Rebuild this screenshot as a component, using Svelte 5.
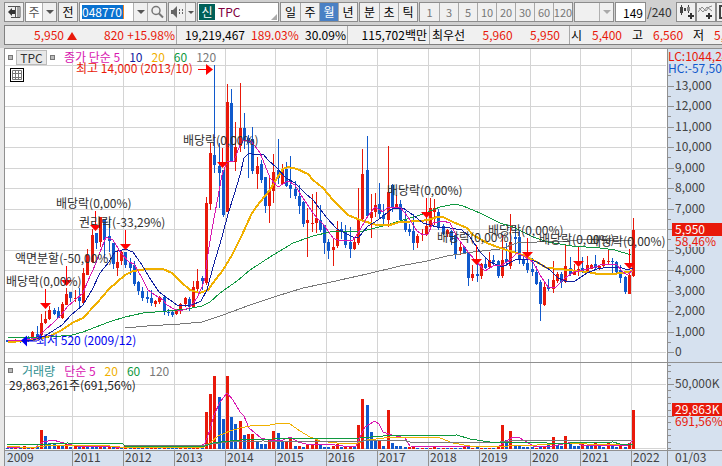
<script lang="ts">
	type Candle = [dir: string, high: number, top: number, bottom: number, low: number];

	const periods = ['일', '주', '월', '년'];
	const intraday = ['분', '초', '틱'];
	const steps = [1, 3, 5, 10, 20, 30, 60, 120];

	let period = $state('월');
	let code = $state('048770');
	let count = $state('149');

	// One entry per candle: direction, high, body top, body bottom, low
	const candles: Candle[] = `d 340 340 342 342|u 340 340 342 342|u 339 340 342 342|d 340 340 342 343|u 337 340 341 342
d 336 338 341 342|u 331 332 338 339|d 326 334 337 340|u 314 323 335 337|u 311 319 323 324
u 306 310 319 320|d 308 310 314 315|d 307 311 318 318|u 302 304 318 319|u 288 294 305 305
d 292 292 298 302|u 290 298 299 302|d 288 297 301 307|u 268 273 303 303|u 249 255 275 275
u 229 235 262 263|d 233 233 243 249|u 217 217 242 247|d 219 219 240 258|d 219 236 241 252
d 243 243 264 269|u 250 262 268 276|u 251 252 261 265|d 252 252 265 268|d 258 262 268 275
d 261 265 284 286|d 281 282 291 295|d 287 291 298 301|d 291 297 299 303|d 290 298 303 306
u 300 301 304 307|u 296 297 302 304|d 295 297 312 315|d 309 312 313 316|d 310 312 315 317
u 309 310 314 315|u 303 304 311 314|u 297 298 304 307|d 297 299 307 311|u 281 287 307 308
u 269 281 289 292|d 276 278 281 290|u 197 203 283 285|u 143 153 204 210|d 65 155 165 173
d 143 166 173 208|d 170 170 215 217|u 84 102 212 212|d 89 103 161 162|u 122 147 162 171
u 83 128 146 152|d 113 128 140 149|d 135 138 143 178|d 127 139 171 174|u 157 166 174 189
d 160 164 180 183|d 177 177 206 213|u 176 191 206 223|u 154 172 191 203|d 139 170 178 184
u 164 170 184 185|d 162 169 186 187|d 156 185 189 198|d 181 189 196 199|d 185 196 206 214
d 201 202 224 227|u 208 220 223 257|u 194 223 224 232|u 192 218 223 233|d 205 220 230 232
d 225 225 243 254|d 239 242 251 259|u 239 247 250 266|u 221 230 246 248|d 222 229 232 239
d 225 231 245 248|d 227 242 249 258|u 237 242 249 250|u 188 219 243 245|u 149 174 219 222
d 136 170 216 217|u 194 212 218 238|u 193 205 212 217|d 183 204 214 218|d 204 215 219 224
u 146 192 220 227|d 184 185 207 212|u 195 204 208 208|d 200 204 220 222|d 211 220 230 232
d 224 229 232 236|d 214 231 243 250|u 234 236 243 248|u 229 234 235 241|u 198 226 235 236
u 198 208 227 229|u 199 208 212 225|d 209 212 227 230|d 224 226 234 235|u 229 230 234 237
d 230 231 240 245|d 235 235 254 259|u 241 247 251 255|d 246 247 254 254|d 252 253 278 286
u 265 274 278 281|d 261 274 276 282|u 263 264 276 279|d 258 264 268 269|u 252 260 267 269
d 255 260 262 265|d 260 261 276 278|u 235 260 276 278|d 243 259 262 266|u 214 242 266 269
d 226 237 239 253|d 230 237 260 264|d 256 260 264 266|d 258 263 270 273|d 258 269 272 276
d 266 272 284 285|d 280 282 304 321|u 283 287 305 306|d 279 287 289 291|u 261 280 289 293
u 272 274 281 283|d 272 274 282 288|u 245 266 282 283|d 257 268 274 276|u 264 270 275 275
u 267 269 272 276|d 257 268 271 273|u 256 265 272 272|u 264 265 269 269|d 255 264 268 270
u 265 266 268 270|u 258 260 266 267|u 249 261 262 264|d 258 261 262 275|d 261 262 272 275
d 265 270 278 283|d 276 277 292 294|u 273 275 294 294|u 218 230 276 277`
		.split(/[\n|]/)
		.map((row) => {
			const [dir, ...values] = row.trim().split(' ');
			return [dir, ...values.map(Number)] as Candle;
		});

	// Bar heights, negative when the volume fell
	const volumes = [
		-1, -1, 1, -1, 3, -1, 1, -2, 19, -13, -6, -5, 4, -4, 5, -2, 3, -3, 3, -3, -3, -3, 3, -2, 2, -2, 2,
		-2, 3, -3, 2, -2, 3, -2, 2, 2, -2, 2, -2, -2, -1, 2, 1, -2, 2, 2, -2, 37, 55, 73, -52, -30, 73,
		-32, -25, 28, -14, 15, 15, -7, -5, -5, 10, 18, -16, -7, 7, 10, -3, 3, -2, 4, 4, 10, -4, -2, -2, 3,
		5, -2, 2, 2, -2, 24, 50, -44, -17, -9, 9, -3, 39, -6, -3, -3, -2, 2, 2, -1, 1, -1, 1, 3, -1, 1,
		-1, 1, -1, -1, 3, -2, 1, -2, 1, -1, 1, -1, 2, 24, -9, 18, -3, -3, -2, -2, -2, 1, -2, 3, -5, 12,
		-4, -3, 13, -5, -3, -3, 5, -3, -3, 6, -3, -2, 6, -4, -2, 4, -2, 6, 39
	];

	const priceLines = [
		{
			name: 'ma120',
			points:
				'125,328 147,326 180,324 202,322 223,315 250,305 277,296 303,288 327,283 340,280 367,274 400,266 427,261 447,256 473,252 500,249 517,243 537,242 567,241 587,239 607,240 631,241'
		},
		{
			name: 'ma60',
			points:
				'8,338 50,337 72,335 83,332 96,327 109,322 125,317 143,313 167,311 187,309 202,306 210,302 220,293 237,281 250,270 270,257 293,243 313,236 330,232 350,231 363,231 383,226 400,221 417,216 428,212 440,207 455,204 463,206 480,213 500,223 513,227 533,237 548,242 572,246 600,248 615,250 631,255'
		},
		{
			name: 'ma20',
			points:
				'8,342 25,341 38,339 50,336 62,330 72,323 83,318 97,303 109,289 125,275 133,271 147,269 163,269 172,273 180,281 190,290 200,293 208,290 213,283 223,270 232,255 242,235 252,213 260,202 270,190 277,178 283,169 288,167 297,169 308,174 313,180 323,188 333,200 341,208 348,215 360,220 377,225 390,225 400,222 420,221 428,220 437,217 443,217 453,222 467,228 473,235 487,243 500,248 513,252 523,255 535,261 547,268 560,269 577,271 588,272 598,274 613,274 628,272 633,271'
		},
		{
			name: 'ma10',
			points:
				'8,341 33,340 45,336 62,325 71,315 83,305 92,290 100,273 109,262 115,252 125,249 133,252 142,265 151,280 159,292 170,300 177,305 190,306 201,301 207,290 213,267 222,237 228,214 234,195 240,175 244,158 249,153 255,155 263,154 268,160 277,168 286,178 295,183 305,193 313,200 327,218 337,229 353,237 358,238 368,226 378,220 393,208 403,208 413,215 423,223 437,227 450,228 462,230 470,237 480,252 490,262 502,267 517,259 527,259 537,262 550,270 558,278 568,282 575,281 587,273 597,269 610,267 620,267 627,270 633,268'
		},
		{
			name: 'ma5',
			points:
				'8,341 25,340 37,338 45,330 54,322 62,314 67,307 75,300 83,293 87,283 96,263 100,252 106,237 113,240 121,253 129,262 134,264 142,278 148,290 155,295 163,300 167,305 174,309 180,311 189,308 197,298 202,287 205,278 207,260 211,235 215,213 222,175 227,162 234,161 240,145 244,140 252,142 260,153 267,170 270,178 278,187 288,181 295,185 303,198 311,210 316,217 324,225 333,238 340,241 353,240 360,230 366,219 375,207 383,212 388,207 400,207 408,217 417,231 423,235 428,234 433,223 443,221 450,223 457,237 468,252 475,260 485,271 493,266 502,265 510,260 517,253 525,257 533,262 540,275 548,287 555,288 565,278 574,272 583,270 595,267 603,264 616,264 623,272 627,275 633,270'
		}
	];

	const volumeLines = [
		{
			name: 'ma5',
			points:
				'7,447 36,448 38,445 43,442 53,440 60,442 67,444 77,446 103,446 115,447 200,447 205,443 210,430 214,415 220,402 227,393 233,400 240,412 244,416 249,428 261,438 269,440 283,440 290,437 298,442 310,445 327,444 343,446 356,446 360,437 365,427 375,421 379,424 383,432 392,435 405,438 410,446 470,447 498,447 505,442 513,437 520,438 528,443 535,447 553,446 573,442 585,446 613,445 627,446 633,440'
		},
		{
			name: 'ma20 thin',
			points:
				'7,446 20,447 37,447 53,445 100,445 120,447 204,447 210,443 218,436 230,431 240,428 250,426 270,425 280,423 290,424 300,431 310,437 320,441 337,443 358,443 367,440 393,437 417,437 440,438 453,443 470,446 498,447 508,446 537,445 567,443 587,444 603,445 630,444'
		},
		{
			name: 'ma120',
			points:
				'125,445 205,445 227,442 263,441 360,442 367,440 403,440 410,442 500,442 510,441 633,440'
		},
		{
			name: 'ma60',
			points:
				'7,444 50,444 67,443 123,444 125,446 205,446 213,443 230,441 240,440 273,439 360,438 383,436 457,435 470,439 490,442 530,442 547,443 570,443 613,442 620,444 633,444'
		}
	];

	const years = [
		{ x: 72, year: 2011 },
		{ x: 123, year: 2012 },
		{ x: 174, year: 2013 },
		{ x: 225, year: 2014 },
		{ x: 275, year: 2015 },
		{ x: 326, year: 2016 },
		{ x: 377, year: 2017 },
		{ x: 428, year: 2018 },
		{ x: 479, year: 2019 },
		{ x: 530, year: 2020 },
		{ x: 580, year: 2021 },
		{ x: 631, year: 2022 }
	];

	const notes = [
		{ x: 6, y: 286, text: '배당락(0,00%)' },
		{ x: 15, y: 263, text: '액면분할(-50,00%)' },
		{ x: 56, y: 208, text: '배당락(0,00%)' },
		{ x: 79, y: 227, text: '권리락(-33,29%)' },
		{ x: 183, y: 145, text: '배당락(0,00%)' },
		{ x: 387, y: 195, text: '배당락(0,00%)' },
		{ x: 437, y: 242, text: '배당락(0,00%)' },
		{ x: 488, y: 235, text: '배당락(0,00%)' },
		{ x: 539, y: 244, text: '배당락(0,00%)' },
		{ x: 590, y: 246, text: '배당락(0,00%)' }
	];

	const arrows = [
		{ x: 45, from: 289, to: 309 },
		{ x: 66, from: 266, to: 286 },
		{ x: 95, from: 211, to: 231 },
		{ x: 125, from: 230, to: 250 },
		{ x: 222, from: 148, to: 168 },
		{ x: 426, from: 198, to: 218 },
		{ x: 476, from: 245, to: 265 },
		{ x: 527, from: 238, to: 258 },
		{ x: 578, from: 247, to: 267 },
		{ x: 629, from: 249, to: 269 }
	];

	const prices = Array.from({ length: 14 }, (_, k) => k);
	const volumeTicks = Array.from({ length: 14 }, (_, k) => Math.round(448 - k * 6.4));

	function candleX(i: number) {
		return Math.round(7 + i * 4.23);
	}

	function priceY(k: number) {
		return Math.round(352 - k * 20.5);
	}
</script>

<div class="window">
	<div class="toolbar">
		<button type="button" class="box icon" aria-label="패널">
			<svg width="14" height="14" viewBox="0 0 14 14">
				<path d="M2 1.5h11v11H4M8.500 1v12M11 1v12M1 1.500h3" fill="none" stroke="#555" />
				<path d="M1 7l4-4v8zM5 5h3v4H5z" fill="#333" />
			</svg>
		</button>
		<div class="box combo">
			<span class="type">주</span>
			<button type="button" class="drop" aria-label="종목 구분"></button>
		</div>
		<button type="button" class="box all">전</button>
		<div class="box code">
			<input aria-label="종목 코드" bind:value={code} size="6" />
			<span class="spacer"></span>
			<button type="button" class="drop" aria-label="최근 종목"></button>
			<button type="button" class="search" aria-label="검색">
				<svg width="14" height="14" viewBox="0 0 14 14">
					<circle cx="6" cy="5.500" r="4" fill="none" stroke="#777" stroke-width="1.500" />
					<path d="M9 8.500l4 4" stroke="#777" stroke-width="2" />
				</svg>
			</button>
		</div>
		<div class="box sound">
			<button type="button" aria-label="소리">
				<svg width="14" height="14" viewBox="0 0 14 14">
					<path d="M1 5h2l4-4v12L3 9H1z" fill="#666" />
					<path d="M9 5h1M12 5h1M9 8h1M12 8h1" stroke="#666" stroke-width="2" />
				</svg>
			</button>
			<button type="button" class="drop narrow" aria-label="소리 설정"></button>
		</div>
		<div class="box stock">
			<span class="badge">신</span>
			<span>TPC</span>
			<i class="corner"></i>
		</div>
		<div class="box group">
			{#each periods as item}
				<button type="button" class:active={period === item} onclick={() => (period = item)}>{item}</button>
			{/each}
		</div>
		<div class="box group">
			{#each intraday as item}
				<button type="button" class:active={period === item} onclick={() => (period = item)}>{item}</button>
			{/each}
		</div>
		<div class="box group muted">
			{#each steps as step}
				<button type="button" disabled>{step}</button>
			{/each}
		</div>
		<div class="box combo empty">
			<span class="type"></span>
			<button type="button" class="drop" aria-label="주기" disabled></button>
		</div>
		<input class="box count" aria-label="표시 개수" bind:value={count} />
		<span class="total">/240</span>
		<div class="tools">
			<button type="button" class="box icon" aria-label="차트 추가">
				<svg width="16" height="16" viewBox="0 0 16 16">
					<path d="M3.500 1v10M10.500 1v8" stroke="#444" />
					<path d="M2 3h3v6H2zM6 4h2v3H6z" fill="#444" />
					<path d="M9 3h3v4H9z" fill="#888" />
					<path d="M10 12h6M13 9v6" stroke="#333" stroke-width="2" />
				</svg>
			</button>
			<button type="button" class="box icon" aria-label="지표 추가">
				<svg width="16" height="16" viewBox="0 0 16 16">
					<path d="M0 8l4-5 4 4 3-4 3-1M1 4l4 4 4-5 5 4" fill="none" stroke="#888" />
					<path d="M8 12h6M11 9v6" stroke="#333" stroke-width="2" />
				</svg>
			</button>
			<button type="button" class="box icon" aria-label="저장">
				<svg width="16" height="16" viewBox="0 0 16 16">
					<path d="M2 2h12v12H2zM5 2v5h6V2M5 14V10h6" fill="none" stroke="#444" stroke-width="2" />
				</svg>
			</button>
		</div>
	</div>

	<div class="quote">
		<div class="cell change up">
			<span class="last">5,950 <i class="triangle"></i></span>
			<span>820</span>
			<span>+15.98%</span>
		</div>
		<div class="cell volume">
			<span>19,219,467</span>
			<span class="up">189.03%</span>
			<span>30.09%</span>
		</div>
		<div class="cell amount">115,702백만</div>
		<div class="cell best">
			<span>최우선</span>
			<span class="up">5,960</span>
			<span class="up">5,950</span>
		</div>
		<div class="cell ohl">
			<span>시</span>
			<span class="up">5,400</span>
			<span>고</span>
			<span class="up">6,560</span>
			<span>저</span>
			<span class="up">5,110</span>
		</div>
	</div>

	<div class="chart">
		<svg class="plot" viewBox="4 48 718 418" role="img" aria-label="TPC 월봉 차트">
			<rect x="4" y="48" width="664" height="403" fill="#fff" />
			<rect x="668" y="48" width="54" height="418" class="axis" />
			<rect x="4" y="451" width="664" height="15" class="axis" />

			<g class="grid">
				{#each [...prices, 14] as k}
					<path d="M5 {priceY(k)}.5H666" />
				{/each}
				{#each [384, 416, 448] as y}
					<path d="M5 {y}.5H666" />
				{/each}
				{#each years as { x }}
					<path d="M{x}.5 49V450" />
				{/each}
			</g>

			{#each volumes as v, i}
				<rect class={v > 0 ? 'u' : 'd'} x={candleX(i) - 1} y={449 - Math.abs(v)} width="3" height={Math.abs(v)} />
			{/each}
			{#each volumeLines as line}
				<polyline class={line.name} points={line.points} />
			{/each}

			{#each candles as [dir, high, top, bottom, low], i}
				<rect class={dir} x={candleX(i)} y={high} width="1" height={low - high} />
				<rect class={dir} x={candleX(i) - 1} y={top} width="3" height={bottom - top} />
			{/each}
			{#each priceLines as line}
				<polyline class={line.name} points={line.points} />
			{/each}

			{#each arrows as { x, from, to }}
				<path class="arrow" d="M{x} {from}h1v{to - from - 6}h5l-5.500 6l-5.500 -6h5z" />
			{/each}
			<svg x="4" y="48" width="663" height="403" viewBox="4 48 663 403">
				{#each notes as note}
					<text class="note" x={note.x} y={note.y}>{note.text}</text>
				{/each}
			</svg>

			<text class="high" x="76" y="73">최고 14,000 (2013/10)</text>
			<path class="arrow" d="M198 69h8v-5l7 5.500l-7 5.500v-5h-8z" />
			<text class="low" x="36" y="345">최저 520 (2009/12)</text>
			<path class="low" d="M21 340.500l6-5v5h10v1h-10v5z" />

			<g class="frame">
				<path d="M4 48.500H722M4.500 48V466M4 362.500H722M4 450.500H722M667.500 48V466" />
				{#each years as { x }}
					<path d="M{x}.5 451V466" />
				{/each}
				{#each prices as k}
					<path d="M668 {priceY(k)}.5h6M668 {priceY(k + 0.5)}.5h3" />
				{/each}
				{#each volumeTicks as y}
					<path d="M668 {y}.5h3" />
				{/each}
				<path d="M668 384.500h6M668 416.500h6" />
			</g>

			<g class="scale">
				{#each prices.filter((k) => k !== 6) as k}
					<text x="675" y={priceY(k) + 4}>{k === 0 ? '0' : `${k},000`}</text>
				{/each}
				<text x="675" y="388">50,000K</text>
				<text x="675" y="462">01/03</text>
				<text x="7" y="462">2009</text>
				{#each years as { x, year }}
					<text x={x + 2} y="462">{year}</text>
				{/each}
			</g>

			<rect class="axis" x="672" y="236" width="50" height="11" />
			<rect class="u" x="672" y="223" width="50" height="13" />
			<text class="tag" x="675" y="234">5,950</text>
			<text class="high" x="675" y="246">58,46%</text>
			<rect class="u" x="672" y="403" width="50" height="13" />
			<text class="tag" x="675" y="414">29,863K</text>
			<text class="high" x="675" y="426">691,56%</text>
			<text class="high" x="668" y="61">LC:1044,24</text>
			<text class="hc" x="668" y="73">HC:-57,50</text>
		</svg>

		<div class="legend">
			<i class="mark"></i>
			<button type="button" class="name">TPC</button>
			<i class="mark"></i>
			<span class="c5">종가 단순 5</span>
			<span class="c10">10</span>
			<span class="c20">20</span>
			<span class="c60">60</span>
			<span class="c120">120</span>
		</div>
		<button type="button" class="table" aria-label="데이터 표">
			<svg width="10" height="10" viewBox="0 0 10 10">
				<path d="M.5 .5h9v9H.5zM1 3.500h8M1 7.500h8M3.500 1v8M6.500 1v8" fill="none" stroke="#777" />
			</svg>
		</button>
		<div class="legend volume-legend">
			<i class="mark"></i>
			<span class="title">거래량</span>
			<span class="c5">단순 5</span>
			<span class="c20">20</span>
			<span class="c60">60</span>
			<span class="c120">120</span>
			<div class="amount-line">29,863,261주(691,56%)</div>
		</div>
	</div>
</div>

<style>
	:global(body) {
		margin: 0;
		background: #d0d0d0;
	}

	.window {
		overflow: hidden;
		background: #d0d0d0;
		color: #000;
		font-family: 'Noto Sans CJK KR', sans-serif;
		font-size: 12px;
		line-height: 16px;
		white-space: nowrap;
	}

	button,
	input {
		box-sizing: border-box;
		margin: 0;
		padding: 0;
		border: 0;
		background: #f0f0f0;
		color: inherit;
		font: inherit;
	}

	.toolbar {
		display: flex;
		align-items: center;
		gap: 1px;
		height: 20px;
		padding: 2px 0 3px 4px;
	}

	.box {
		display: flex;
		flex: none;
		align-items: center;
		justify-content: center;
		box-sizing: border-box;
		height: 20px;
		border: 1px solid #8c8c8c;
		background: #f0f0f0;
	}

	.box button {
		display: flex;
		align-items: center;
		justify-content: center;
		height: 18px;
	}

	.icon,
	.all {
		width: 20px;
	}

	.combo {
		width: 32px;
		background: #fff;
	}

	.type {
		flex: 1;
		text-align: center;
		color: #555;
	}

	.box .drop {
		width: 14px;
		border-left: 1px solid #b0b0b0;
	}

	.drop::after {
		content: '';
		border: 4px solid transparent;
		border-top: 4px solid #555;
		border-bottom: 0;
	}

	.drop:disabled::after {
		border-top-color: #aaa;
	}

	.box .narrow {
		width: 10px;
	}

	.narrow::after {
		border-width: 3px 3px 0;
	}

	.code {
		width: 88px;
		padding-left: 2px;
		background: #fff;
	}

	.code input {
		width: 42px;
		height: 14px;
		border-right: 1px solid #f08020;
		background: #0a72d0;
		color: #fff;
		line-height: 14px;
	}

	.spacer {
		flex: 1;
	}

	.search {
		width: 19px;
		border-left: 1px solid #b0b0b0;
	}

	.sound {
		width: 28px;
	}

	.sound button:first-child {
		flex: 1;
	}

	.stock {
		position: relative;
		justify-content: flex-start;
		gap: 3px;
		width: 82px;
		padding-left: 1px;
		background: #fff;
		color: #800040;
	}

	.badge {
		width: 16px;
		background: #006058;
		color: #fff;
		text-align: center;
	}

	.corner {
		position: absolute;
		right: 1px;
		bottom: 1px;
		border: 3px solid #aaa;
		border-top-color: transparent;
		border-left-color: transparent;
	}

	.group button {
		width: 19px;
	}

	.group button + button {
		border-left: 1px solid #a8a8a8;
	}

	.group .active {
		background: #4a80c4;
		color: #fff;
	}

	.muted {
		color: #777;
		font-size: 11px;
	}

	.empty {
		width: 40px;
		background: #f0f0f0;
	}

	.count {
		width: 31px;
		padding-right: 2px;
		background: #fff;
		text-align: right;
	}

	.total {
		color: #333;
	}

	.tools {
		display: flex;
		flex: none;
		margin-left: auto;
		margin-right: -14px;
	}

	.quote {
		display: flex;
		box-sizing: border-box;
		height: 20px;
		margin: 0 0 3px 4px;
		border: 1px solid #808080;
		border-right: 0;
		background: #f0f0f0;
	}

	.cell {
		display: flex;
		flex: none;
		align-items: center;
		justify-content: space-between;
		box-sizing: border-box;
		border-right: 1px solid #a8a8a8;
	}

	.up {
		color: #e8190a;
	}

	.change {
		width: 172px;
		padding: 0 1px 0 29px;
	}

	.last {
		margin-right: 24px;
	}

	.triangle {
		display: inline-block;
		border: 5px solid transparent;
		border-top: 0;
		border-bottom: 8px solid #e8190a;
	}

	.volume {
		width: 171px;
		padding: 0 1px 0 8px;
	}

	.amount {
		justify-content: flex-end;
		width: 82px;
		padding-right: 2px;
	}

	.best {
		width: 140px;
		padding: 0 9px 0 2px;
	}

	.ohl {
		flex: 1 0 auto;
		justify-content: flex-start;
		gap: 10px;
		padding-left: 1px;
		border-right: 0;
	}

	.chart {
		position: relative;
		margin-left: 4px;
		box-shadow: -4px 0 #e8e8e8;
	}

	.plot {
		display: block;
		width: 100%;
		height: auto;
	}

	.axis {
		fill: #d6e1ef;
	}

	.grid path {
		stroke: #d4d4d4;
	}

	.frame path {
		stroke: #909090;
	}

	.u,
	.high {
		fill: #e8190a;
	}

	.d,
	.hc {
		fill: #1059cc;
	}

	polyline {
		fill: none;
		shape-rendering: crispEdges;
	}

	.ma5 {
		stroke: #d818b0;
	}

	.ma10 {
		stroke: #1020a0;
	}

	.ma20 {
		stroke: #f0b000;
		stroke-width: 2;
	}

	.thin {
		stroke-width: 1;
	}

	.ma60 {
		stroke: #109840;
	}

	.ma120 {
		stroke: #787878;
	}

	.arrow {
		fill: #ff0000;
	}

	.note {
		fill: #303030;
	}

	.low {
		fill: #0000f0;
	}

	.scale {
		fill: #444;
	}

	.tag {
		fill: #fff;
	}

	.legend {
		position: absolute;
		top: 1px;
		left: 4px;
		display: flex;
		flex-wrap: wrap;
		align-items: center;
		column-gap: 9px;
	}

	.mark {
		width: 3px;
		height: 3px;
		border: 1px solid #777;
		background: #bbb;
	}

	.name {
		width: 31px;
		height: 15px;
		margin: 0 -6px;
		border: 1px solid #bbb;
		background: #e8e8e8;
		color: #333;
		line-height: 13px;
	}

	.table {
		position: absolute;
		top: 20px;
		left: 6px;
		display: flex;
		align-items: center;
		justify-content: center;
		width: 14px;
		height: 14px;
		border: 1px solid #000;
		background: #fff;
	}

	.volume-legend {
		top: 75%;
		row-gap: 0;
		line-height: 14px;
		margin-top: 2px;
	}

	.amount-line {
		flex-basis: 100%;
		padding-left: 1px;
		color: #222;
	}

	.title {
		color: #309090;
	}

	.c5 {
		color: #d818b0;
	}

	.c10 {
		color: #1020a0;
	}

	.c20 {
		color: #f0b000;
	}

	.c60 {
		color: #109840;
	}

	.c120 {
		color: #787878;
	}
</style>
